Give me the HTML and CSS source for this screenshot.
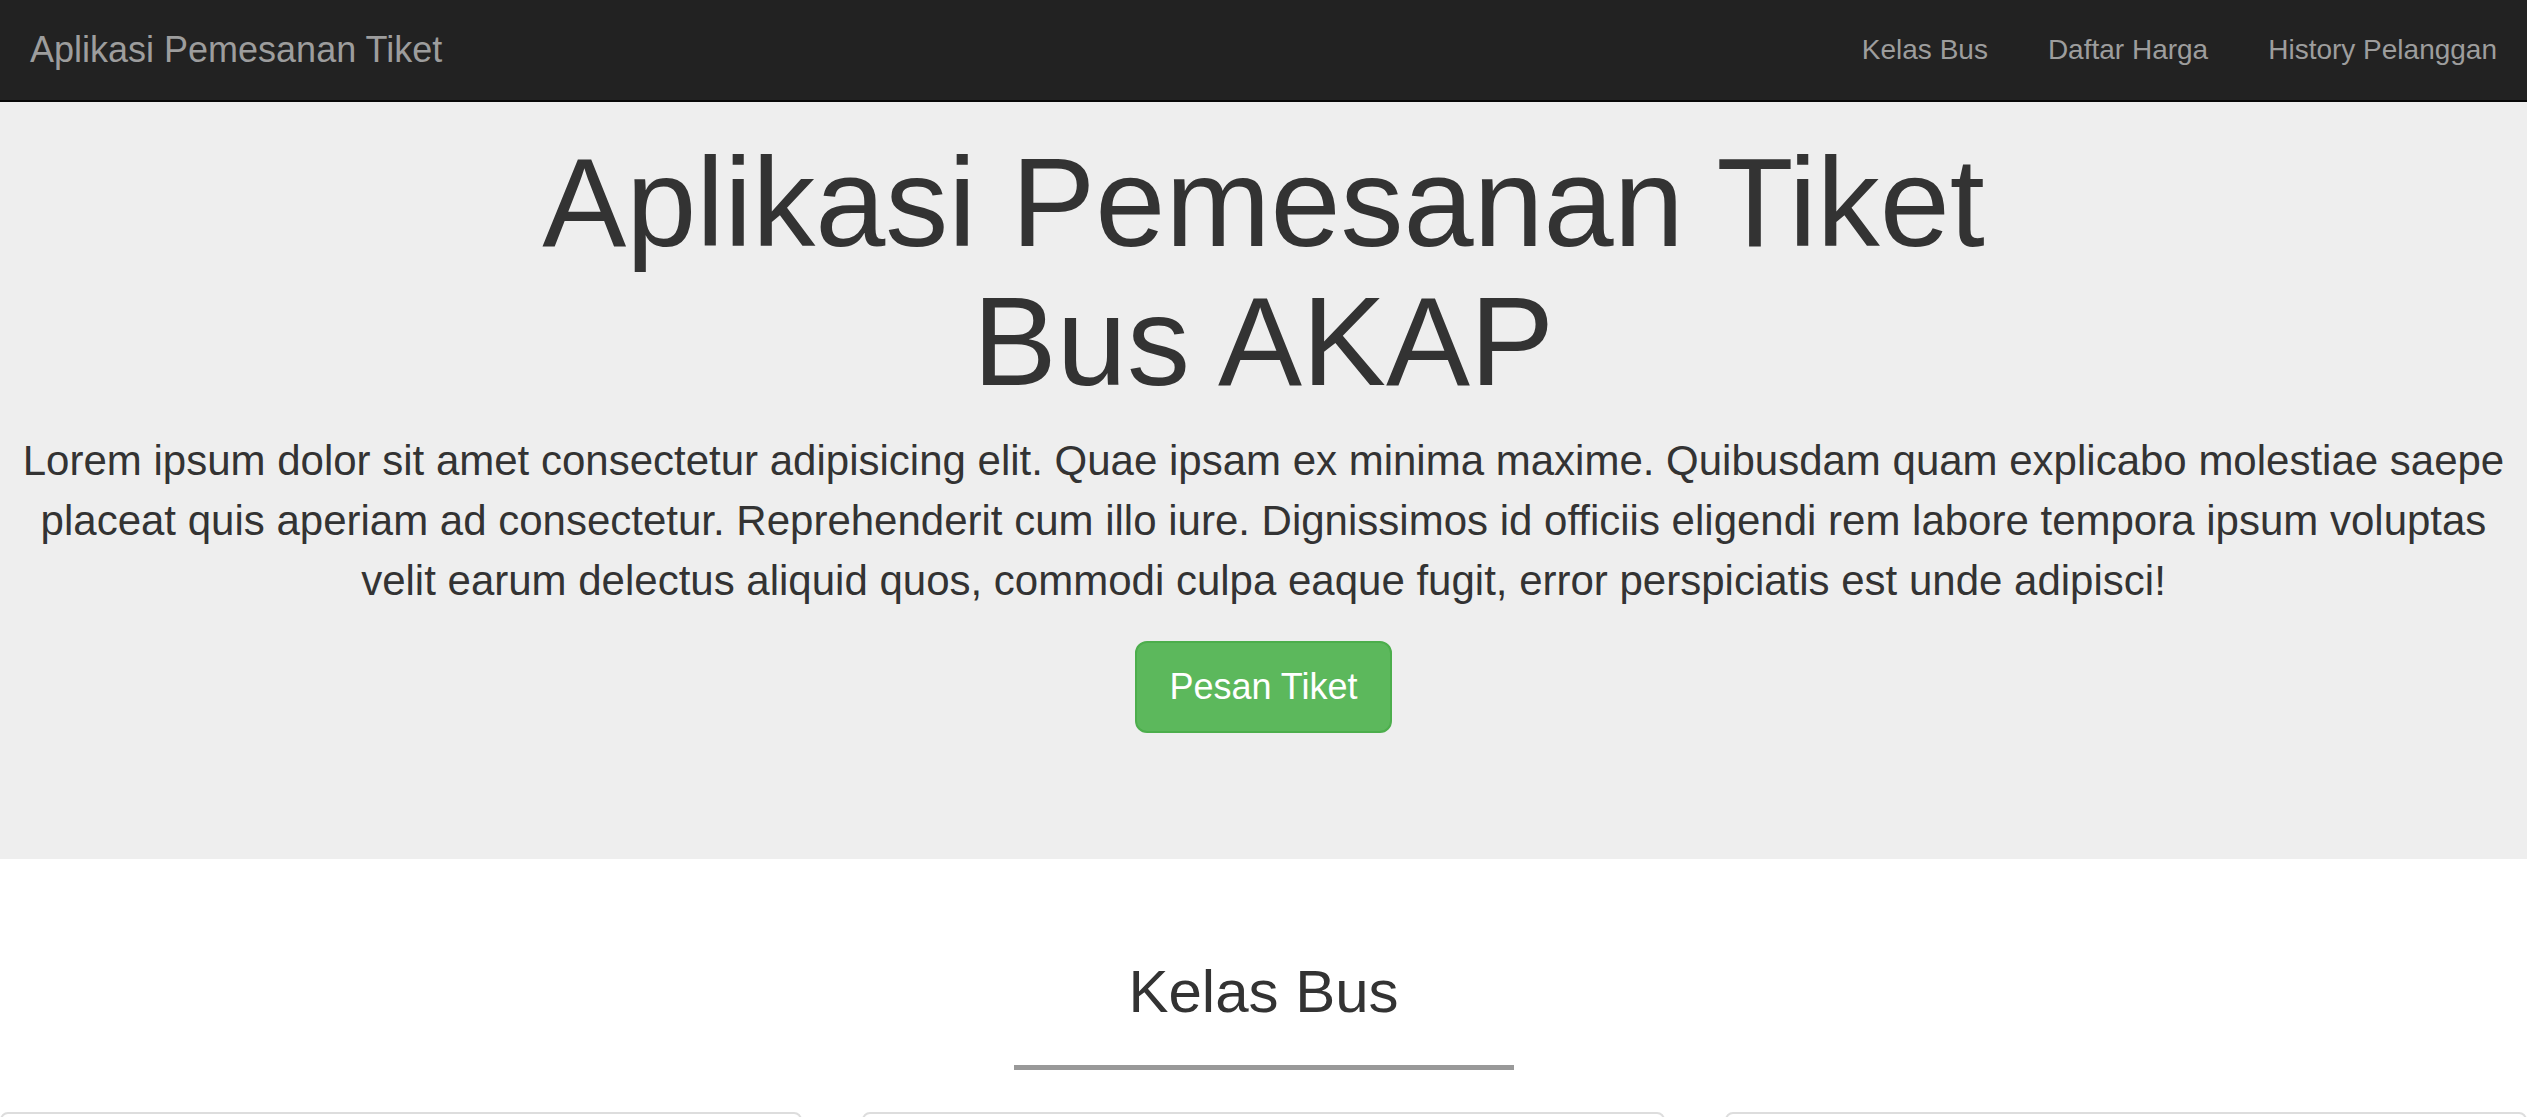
FILE: index.html
```html
<!DOCTYPE html>
<html lang="id">
<head>
<meta charset="utf-8">
<title>Aplikasi Pemesanan Tiket</title>
<link rel="stylesheet" href="styles.css">
</head>
<body>
<nav class="navbar">
  <a class="brand" href="#">Aplikasi Pemesanan Tiket</a>
  <ul class="nav-links">
    <li><a href="#">Kelas Bus</a></li>
    <li><a href="#">Daftar Harga</a></li>
    <li><a href="#">History Pelanggan</a></li>
  </ul>
</nav>

<header class="jumbotron">
  <h1 class="hero-title">Aplikasi Pemesanan Tiket<br>Bus AKAP</h1>
  <p class="hero-text">Lorem ipsum dolor sit amet consectetur adipisicing elit. Quae ipsam ex minima maxime. Quibusdam quam explicabo molestiae saepe placeat quis aperiam ad consectetur. Reprehenderit cum illo iure. Dignissimos id officiis eligendi rem labore tempora ipsum voluptas velit earum delectus aliquid quos, commodi culpa eaque fugit, error perspiciatis est unde adipisci!</p>
  <p class="hero-action"><a class="btn-success" href="#">Pesan Tiket</a></p>
</header>

<section class="kelas">
  <h2 class="section-title">Kelas Bus</h2>
  <div class="section-rule"></div>
  <div class="cards">
    <div class="card"></div>
    <div class="card"></div>
    <div class="card"></div>
  </div>
</section>
</body>
</html>
```
FILE: styles.css
```css
* { box-sizing: border-box; }

html, body {
  margin: 0;
  padding: 0;
}

body {
  font-family: "Liberation Sans", Arial, Helvetica, sans-serif;
  color: #333;
  background: #fff;
  font-size: 28px;
  line-height: 1.42857;
}

.navbar {
  display: flex;
  justify-content: space-between;
  align-items: stretch;
  height: 102px;
  background: #222;
  border-bottom: 2px solid #080808;
}

.brand {
  display: block;
  padding: 30px 30px;
  font-size: 36px;
  line-height: 40px;
  color: #9d9d9d;
  text-decoration: none;
}

.nav-links {
  display: flex;
  margin: 0;
  padding: 0;
  list-style: none;
}

.nav-links a {
  display: block;
  padding: 30px 30px;
  font-size: 28px;
  line-height: 40px;
  color: #9d9d9d;
  text-decoration: none;
}

.jumbotron {
  background: #eee;
  padding: 32px 10px 96px;
  text-align: center;
}

.hero-title {
  margin: 0 0 20px;
  font-size: 126px;
  font-weight: 500;
  line-height: 1.1;
  color: #333;
}

.hero-text {
  margin: 0 0 30px;
  font-size: 42px;
  line-height: 60px;
  font-weight: 200;
}

.hero-action {
  margin: 0 0 30px;
}

.btn-success {
  display: inline-block;
  padding: 20px 32px;
  font-size: 36px;
  line-height: 48px;
  color: #fff;
  background: #5cb85c;
  border: 2px solid #4cae4c;
  border-radius: 12px;
  text-decoration: none;
  vertical-align: top;
}

.kelas {
  padding-top: 100px;
}

.section-title {
  margin: 0;
  font-size: 60px;
  font-weight: 500;
  line-height: 1.1;
  text-align: center;
  color: #333;
}

.section-rule {
  width: 500px;
  height: 5px;
  margin: 40px auto 42px;
  background: #999;
}

.cards {
  display: grid;
  grid-template-columns: repeat(3, 1fr);
  gap: 60px;
}

.card {
  height: 500px;
  border: 2px solid #ddd;
  border-radius: 8px;
  background: #fff;
}
```
